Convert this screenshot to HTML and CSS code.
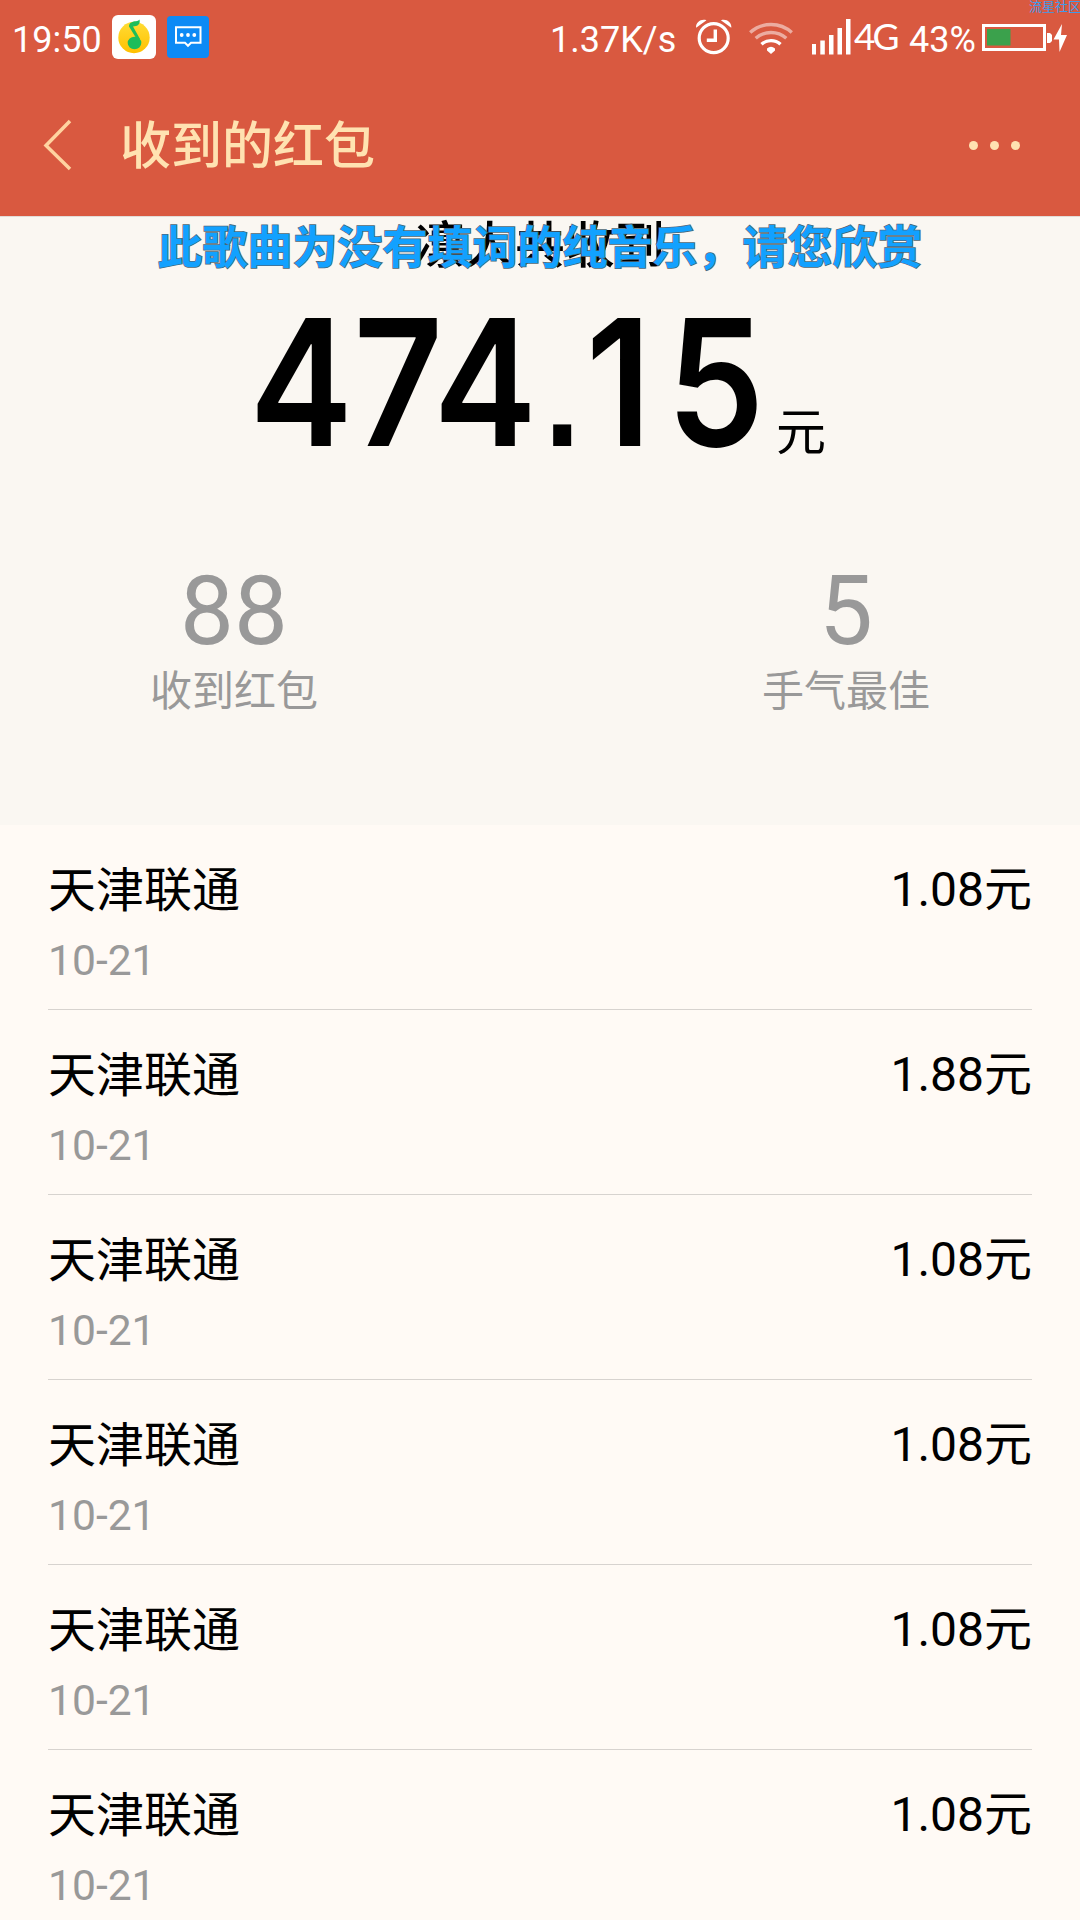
FILE: index.html
```html
<!DOCTYPE html>
<html lang="zh-CN">
<head>
    <meta charset="UTF-8">
    <meta name="viewport" content="width=device-width, initial-scale=1.0">
    <title>收到的红包</title>
    <link rel="stylesheet" href="styles.css">
</head>
<body>
    <div class="corner-mark">流星社区</div>

    <header class="header">
        <div class="status-bar">
            <span class="time">19:50</span>
            <svg class="app-icon music" width="44" height="44" viewBox="0 0 44 44">
                <defs>
                    <linearGradient id="gold" x1="0" y1="0" x2="0" y2="1">
                        <stop offset="0" stop-color="#ffdc35"/>
                        <stop offset="1" stop-color="#ffc000"/>
                    </linearGradient>
                </defs>
                <rect width="44" height="44" rx="6" fill="#fff"/>
                <circle cx="22" cy="22.5" r="15.7" fill="url(#gold)"/>
                <ellipse cx="22.500" cy="28" rx="6.800" ry="6.200" fill="#1dbd5a"/>
                <path d="M17 11.500c0-4 4-5 7-5.200 1.500-.3 2.500-.8 3.500-1.800.8 3.500-.7 5.800-3.500 6.500l-3 .6 7 12.400-3 .5z" fill="#1dbd5a"/>
            </svg>
            <svg class="app-icon chat" width="42" height="42" viewBox="0 0 42 42">
                <rect width="42" height="42" rx="4" fill="#0d8af5"/>
                <path d="M9 11.200h24.500v15.600h-9.500l-3 3-3-3H9z" fill="none" stroke="#fff" stroke-width="2"/>
                <circle cx="14.700" cy="19" r="1.900" fill="#fff"/>
                <circle cx="21" cy="19" r="1.900" fill="#fff"/>
                <circle cx="27.300" cy="19" r="1.900" fill="#fff"/>
            </svg>
            <span class="speed">1.37K/s</span>
            <svg class="alarm" width="38" height="38" viewBox="0 0 38 38" fill="none" stroke="#fff">
                <circle cx="18.700" cy="20.200" r="14.500" stroke-width="3.200"/>
                <path d="M20.300 11.500v10.800h-8.500" stroke-width="3.400"/>
                <path d="M1 9.500C1 4 6 .5 11.500 2.200L1.500 9.500zM36.400 9.500c0-5.500-5-9-10.500-7.300l10 7.300z" fill="#fff" stroke="none"/>
            </svg>
            <svg class="wifi" width="46" height="36" viewBox="0 0 46 36" fill="none" stroke="#fff" stroke-width="3.400">
                <path d="M2.200 13.500a31 31 0 0 1 41.600 0" opacity=".5"/>
                <path d="M7.700 19.300a23 23 0 0 1 30.600 0" opacity=".5"/>
                <path d="M13.500 25.300a14 14 0 0 1 19 0"/>
                <path d="M19 29.500q4-3.500 8 0v2L23 35l-4-3.500z" fill="#fff" stroke="none"/>
            </svg>
            <svg class="signal" width="40" height="36" viewBox="0 0 40 36" fill="#fff">
                <rect x="0" y="25" width="4" height="10.500"/>
                <rect x="8.300" y="21.500" width="4.500" height="14"/>
                <rect x="17" y="16" width="4.500" height="19.500"/>
                <rect x="25.500" y="9" width="4.500" height="26.500"/>
                <rect x="34" y="0" width="4.500" height="35.500"/>
            </svg>
            <span class="network">4G</span>
            <span class="percent">43%</span>
            <svg class="battery" width="86" height="30" viewBox="0 0 86 30">
                <rect x="1.500" y="2.500" width="61" height="24" fill="none" stroke="#fff" stroke-width="3"/>
                <rect x="5" y="6" width="23.500" height="16.500" fill="#3ba14c"/>
                <path d="M65 10h3l2 2v6l-2 2h-3z" fill="#fff"/>
                <path d="M80 1L71.500 16.500h5.500L77.500 29 85 12h-6z" fill="#fff"/>
            </svg>
        </div>
        <div class="title-bar">
            <svg class="back" width="30" height="52" viewBox="0 0 30 52">
                <path d="M27 2L3 26.500 27 50" fill="none" stroke="#ffd3a0" stroke-width="3.500"/>
            </svg>
            <h1>收到的红包</h1>
            <div class="more"><i></i><i></i><i></i></div>
        </div>
    </header>

    <section class="summary">
        <div class="owner">凛人共收到</div>
        <div class="lyric">此歌曲为没有填词的纯音乐，请您欣赏</div>
        <div class="total">
            <svg class="amount" width="508" height="195" viewBox="0 0 508 195">
                <text class="amount-text" transform="scale(.88 1)" y="169" x="-5 113 204 330 377 469">474<tspan class="point">.</tspan>15</text>
            </svg>
            <span class="unit">元</span>
        </div>
        <div class="stats">
            <div class="stat">
                <div class="count">88</div>
                <div class="label">收到红包</div>
            </div>
            <div class="stat">
                <div class="count">5</div>
                <div class="label">手气最佳</div>
            </div>
        </div>
    </section>

    <ul class="list">
        <li><div class="info"><p class="name">天津联通</p><p class="date">10-21</p></div><span class="money">1.08元</span></li>
        <li><div class="info"><p class="name">天津联通</p><p class="date">10-21</p></div><span class="money">1.88元</span></li>
        <li><div class="info"><p class="name">天津联通</p><p class="date">10-21</p></div><span class="money">1.08元</span></li>
        <li><div class="info"><p class="name">天津联通</p><p class="date">10-21</p></div><span class="money">1.08元</span></li>
        <li><div class="info"><p class="name">天津联通</p><p class="date">10-21</p></div><span class="money">1.08元</span></li>
        <li><div class="info"><p class="name">天津联通</p><p class="date">10-21</p></div><span class="money">1.08元</span></li>
    </ul>
</body>
</html>
```

FILE: styles.css
```css
* {
    box-sizing: border-box;
    margin: 0;
    padding: 0;
}

body {
    width: 1080px;
    height: 1920px;
    position: relative;
    overflow: hidden;
    background: #fffaf5;
    color: #000;
    font-family: Roboto, "Noto Sans CJK SC", sans-serif;
}

svg {
    display: block;
    flex: none;
}

.corner-mark {
    position: absolute;
    top: 0;
    right: -1px;
    z-index: 2;
    color: #3d9bea;
    font-size: 13px;
    line-height: 13px;
}

.header {
    height: 217px;
    background: #d95940;
    border-bottom: 1px solid #e2dcd8;
}

.status-bar {
    height: 76px;
    padding-left: 12px;
    display: flex;
    align-items: flex-start;
    color: #fff;
    font-size: 36px;
    line-height: 42px;
}

.status-bar span {
    margin-top: 19px;
    white-space: nowrap;
}

.time {
    width: 100px;
}

.music {
    margin-top: 15px;
}

.chat {
    margin: 16px 0 0 11px;
}

.speed {
    width: 127px;
    margin-left: 341px;
}

.alarm {
    margin: 18px 0 0 18px;
}

.wifi {
    margin: 19px 0 0 15px;
}

.signal {
    margin: 19px 0 0 18px;
}

.status-bar .network {
    width: 50px;
    margin: 15px 0 0 2px;
    font-family: Lato, sans-serif;
    font-size: 37px;
    letter-spacing: -3px;
}

.percent {
    width: 68px;
    margin-left: 5px;
}

.battery {
    margin: 23px 0 0 5px;
}

.title-bar {
    height: 138px;
    padding: 0 60px 0 43px;
    display: flex;
    align-items: center;
}

.title-bar h1 {
    margin: 4px 0 0 47px;
    color: #ffe2b1;
    font-size: 51px;
    font-weight: 500;
    line-height: 60px;
}

.more {
    margin-left: auto;
    display: flex;
    gap: 12px;
}

.more i {
    width: 9px;
    height: 9px;
    border-radius: 50%;
    background: #ffe2b1;
}

.summary {
    height: 608px;
    position: relative;
    background: #faf7f2;
    text-align: center;
}

.owner {
    height: 60px;
    font-size: 50px;
    font-weight: 500;
    line-height: 59px;
}

/* desktop lyric floats over the page */
.lyric {
    position: absolute;
    top: 2px;
    left: 0;
    width: 1080px;
    color: #12a1ff;
    font-size: 45px;
    font-weight: 700;
    line-height: 60px;
    -webkit-text-stroke: 1.5px #4d6674;
    paint-order: stroke fill;
}

.total {
    height: 195px;
    padding-left: 254px;
    display: flex;
    align-items: flex-start;
}

.amount {
    overflow: visible;
}

.amount-text {
    font-family: Inter, sans-serif;
    font-size: 176.5px;
    font-weight: 600;
}

.point {
    font-family: "Liberation Sans", sans-serif;
    font-size: 145px;
    font-weight: 700;
}

.unit {
    margin: 129px 0 0 14px;
    font-size: 50px;
    line-height: 54px;
}

.stats {
    padding: 91px 84px 0;
    display: flex;
    justify-content: space-between;
    color: #999;
}

.stat {
    width: 300px;
}

.count {
    font-size: 96px;
    line-height: 96px;
}

.label {
    margin-top: 3px;
    font-size: 42px;
    line-height: 60px;
}

.list {
    list-style: none;
    padding: 0 48px;
}

.list li {
    height: 185px;
    display: flex;
    justify-content: space-between;
    border-bottom: 1px solid #d7d3cf;
}

.name,
.money {
    padding-top: 36px;
    font-size: 48px;
    line-height: 60px;
}

.money {
    padding-top: 35px;
}

.date {
    margin-top: 14px;
    color: #999;
    font-size: 42.6px;
    line-height: 50px;
}
```
